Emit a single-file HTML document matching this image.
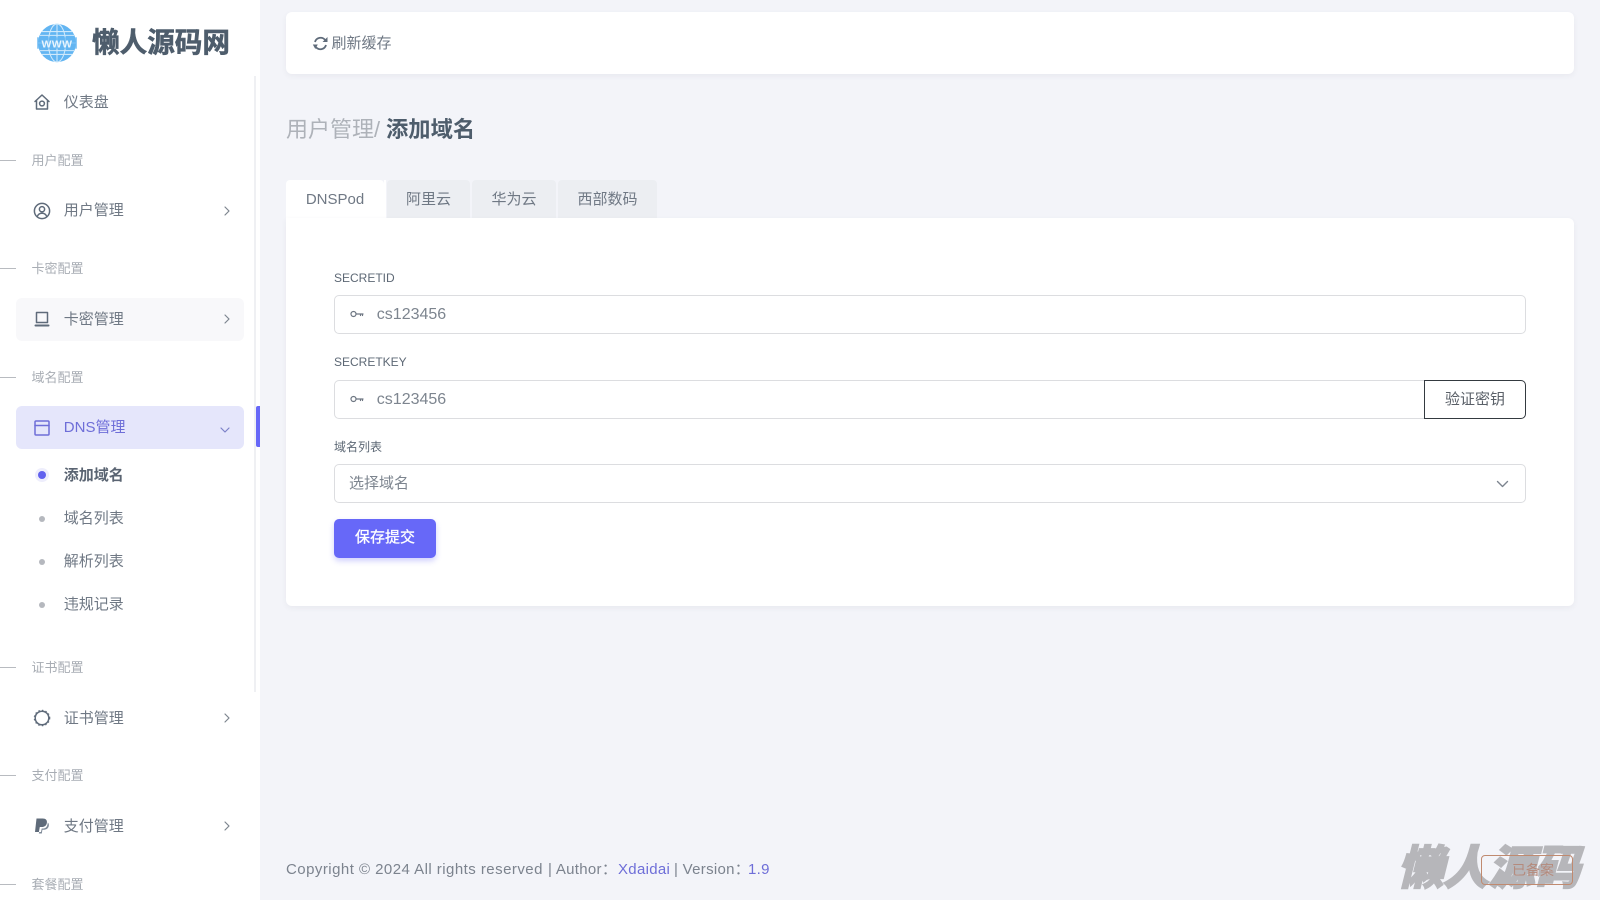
<!DOCTYPE html>
<html lang="zh"><head><meta charset="utf-8"><title>添加域名</title>
<style>
*{box-sizing:border-box}
html,body{margin:0;padding:0;width:1600px;height:900px;overflow:hidden;background:#f3f4f9}
body{font-family:"Liberation Sans","Noto Sans CJK SC",sans-serif;color:#5d6875;position:relative}
.a{position:absolute;white-space:nowrap}
.side{position:absolute;left:0;top:0;width:260px;height:900px;background:#fff}
.item{position:absolute;left:63.8px;font-size:15px;line-height:20px;color:#6f7884}
.lab{position:absolute;left:31.5px;font-size:13px;line-height:18px;color:#a8adb4}
.ln{position:absolute;left:0;width:16px;height:1px;background:#b8bbc0}
.ic{position:absolute;fill:none;stroke:#5f6b7a;stroke-width:1.5;stroke-linecap:round;stroke-linejoin:round}
.card{position:absolute;background:#fff;border-radius:6px;box-shadow:0 2px 6px rgba(60,60,90,.06)}
.tab{position:absolute;top:180px;height:38px;background:#eceef2;text-align:center;line-height:40px;font-size:15px;color:#6f7884;border-radius:4px 4px 0 0}
.f{position:absolute;left:334px;font-size:12px;line-height:16px;color:#5d6875}
.inp{position:absolute;left:334px;width:1192px;height:39px;border:1px solid #dcdde0;border-radius:5px;background:#fff}
.val{position:absolute;left:376.8px;font-size:16px;line-height:20px;color:#7d858f}
.ft{position:absolute;top:860px;font-size:15px;line-height:20px;color:#7c838e;white-space:nowrap}
</style></head><body>

<div class="side">
<svg class="a" style="left:37px;top:23px" width="40" height="40" viewBox="0 0 42 42" fill="none"><circle cx="21" cy="21" r="20" fill="#62b5f2"/><g stroke="#cfe9fb" stroke-width="1.1"><ellipse cx="21" cy="21" rx="9" ry="20"/><path d="M21 1v40M5 9h32M5 33h32M1 21h40M3 13h36M3 29h36"/></g><rect x="0" y="15" width="42" height="12" fill="#62b5f2" opacity=".7"/><text x="21" y="25.5" text-anchor="middle" font-family="Liberation Sans" font-size="11" font-weight="700" fill="#e8f5fe" letter-spacing=".5">WWW</text></svg>
<div class="a" style="left:92px;top:23px;font-size:27.6px;line-height:40px;font-weight:700;color:#4e5d6c;-webkit-text-stroke:.6px #4e5d6c">懒人源码网</div>

<div class="a" style="left:254px;top:76px;width:2px;height:616px;background:#eff0f3"></div>
<div class="a" style="left:256px;top:406px;width:4px;height:41px;background:#6768f8;border-radius:2px 0 0 2px"></div>

<svg class="ic" style="left:33px;top:93px" width="18" height="18" viewBox="0 0 18 18"><path d="M2 8.5 9 2l7 6.5M3.5 7.5V16h11V7.5"/><circle cx="9" cy="10.5" r="2.4"/></svg>
<div class="item" style="top:93px">仪表盘</div>

<div class="ln" style="top:160px"></div><div class="lab" style="top:152px">用户配置</div>
<svg class="ic" style="left:33px;top:202px" width="18" height="18" viewBox="0 0 18 18"><circle cx="9" cy="9" r="7.6"/><circle cx="9" cy="7.2" r="2.6"/><path d="M4.2 14.6c.8-2.4 2.6-3.4 4.8-3.4s4 1 4.8 3.4"/></svg>
<div class="item" style="top:201px">用户管理</div>
<svg class="ic" style="left:222px;top:205px;stroke:#7d858f;stroke-width:1.2" width="10" height="12" viewBox="0 0 10 12"><path d="M3 2l4 4-4 4"/></svg>

<div class="ln" style="top:268px"></div><div class="lab" style="top:260px">卡密配置</div>
<div class="a" style="left:16px;top:298px;width:228px;height:43px;background:#f8f8fa;border-radius:6px"></div>
<svg class="ic" style="left:33px;top:310px" width="18" height="18" viewBox="0 0 18 18"><rect x="3.5" y="2.5" width="11" height="10"/><path d="M2.5 15.5h13" stroke-width="2"/></svg>
<div class="item" style="top:310px">卡密管理</div>
<svg class="ic" style="left:222px;top:313px;stroke:#7d858f;stroke-width:1.2" width="10" height="12" viewBox="0 0 10 12"><path d="M3 2l4 4-4 4"/></svg>

<div class="ln" style="top:377px"></div><div class="lab" style="top:369px">域名配置</div>
<div class="a" style="left:16px;top:406px;width:228px;height:43px;background:#e5e6fb;border-radius:6px"></div>
<svg class="ic" style="left:33px;top:419px;stroke:#6e6ed8" width="18" height="18" viewBox="0 0 18 18"><rect x="2" y="2" width="14" height="14" rx="1"/><path d="M2 6.5h14"/></svg>
<div class="item" style="top:418px;color:#6e6ed8">DNS管理</div>
<svg class="ic" style="left:219px;top:425px;stroke:#7d80c8;stroke-width:1.2" width="12" height="10" viewBox="0 0 12 10"><path d="M2 3l4 4 4-4"/></svg>

<div class="a" style="left:38px;top:471px;width:8px;height:8px;border-radius:50%;background:#6262ee;box-shadow:0 0 0 3px #eeeefc"></div>
<div class="item" style="top:466px;font-weight:700;color:#5a6472">添加域名</div>
<div class="a" style="left:39px;top:516px;width:6px;height:6px;border-radius:50%;background:#b5b8be"></div>
<div class="item" style="top:509px">域名列表</div>
<div class="a" style="left:39px;top:559px;width:6px;height:6px;border-radius:50%;background:#b5b8be"></div>
<div class="item" style="top:552px">解析列表</div>
<div class="a" style="left:39px;top:602px;width:6px;height:6px;border-radius:50%;background:#b5b8be"></div>
<div class="item" style="top:595px">违规记录</div>

<div class="ln" style="top:667px"></div><div class="lab" style="top:659px">证书配置</div>
<svg class="ic" style="left:33px;top:709px;stroke-width:1.5" width="18" height="18" viewBox="0 0 18 18"><circle cx="9" cy="9" r="6.8"/><circle cx="9" cy="9" r="7.7" stroke-width="1.2" stroke-dasharray="1.4 2.2" stroke-linecap="butt"/></svg>
<div class="item" style="top:709px">证书管理</div>
<svg class="ic" style="left:222px;top:712px;stroke:#7d858f;stroke-width:1.2" width="10" height="12" viewBox="0 0 10 12"><path d="M3 2l4 4-4 4"/></svg>

<div class="ln" style="top:775px"></div><div class="lab" style="top:767px">支付配置</div>
<svg class="a" style="left:33px;top:817px" width="18" height="18" viewBox="0 0 18 18"><path d="M3.5 1.5h6.2c3 0 4.6 1.6 4.2 4.2-.4 2.8-2.4 4.3-5.2 4.3H6.8L5.9 15H2z" fill="#5f6b7a"/><path d="M14.8 5.5c.9.8 1.3 2 1 3.4-.5 2.5-2.3 3.8-4.8 3.8H9.4L8.8 16.5H5.8l.4-1.5H8l.7-3.5h1.5c2.5 0 4.2-1.6 4.6-6z" fill="#7f8a98"/></svg>
<div class="item" style="top:817px">支付管理</div>
<svg class="ic" style="left:222px;top:820px;stroke:#7d858f;stroke-width:1.2" width="10" height="12" viewBox="0 0 10 12"><path d="M3 2l4 4-4 4"/></svg>

<div class="ln" style="top:884px"></div><div class="lab" style="top:876px">套餐配置</div>
</div>

<div class="card" style="left:286px;top:12px;width:1288px;height:62px"></div>
<svg class="a" style="left:312px;top:35px" width="17" height="17" viewBox="0 0 17 17" fill="none"><path d="M3 7a5.8 5.8 0 0 1 10-2.2M14 10a5.8 5.8 0 0 1-10 2.2" stroke="#5f6b7a" stroke-width="1.8"/><path d="M15.5 2v5h-5zM.8 9.5h5l-2.5 4.5z" fill="#5f6b7a"/></svg>
<div class="a" style="left:331.5px;top:34px;font-size:15px;line-height:20px;color:#6f7884">刷新缓存</div>

<div class="a" style="left:286px;top:114px;font-size:22px;line-height:32px;color:#aeb2b9">用户管理/</div>
<div class="a" style="left:386px;top:114px;font-size:22.3px;line-height:32px;font-weight:700;color:#4e5d6c">添加域名</div>

<div class="tab" style="left:286px;width:98px;background:#fff;padding-right:0">DNSPod</div>
<div class="a" style="left:384px;top:180px;width:2px;height:38px;background:#fff"></div>
<div class="tab" style="left:387px;width:83px">阿里云</div>
<div class="tab" style="left:472px;width:84px">华为云</div>
<div class="tab" style="left:558px;width:99px">西部数码</div>

<div class="card" style="left:286px;top:218px;width:1288px;height:388px;border-radius:0 6px 6px 6px"></div>

<div class="f" style="top:270px">SECRETID</div>
<div class="inp" style="top:295px"></div>
<svg class="ic" style="left:350px;top:309px;stroke:#6d7682;stroke-width:1.2" width="14" height="10" viewBox="0 0 14 10"><circle cx="3.5" cy="5" r="2.5"/><path d="M6 5h7M10.5 5v1.5M12.5 5v1.5"/></svg>
<div class="val" style="top:305px">cs123456</div>

<div class="f" style="top:354px">SECRETKEY</div>
<div class="inp" style="top:380px;width:1100px;border-radius:5px 0 0 5px"></div>
<svg class="ic" style="left:350px;top:394px;stroke:#6d7682;stroke-width:1.2" width="14" height="10" viewBox="0 0 14 10"><circle cx="3.5" cy="5" r="2.5"/><path d="M6 5h7M10.5 5v1.5M12.5 5v1.5"/></svg>
<div class="val" style="top:390px">cs123456</div>
<div class="a" style="left:1424px;top:380px;width:102px;height:39px;border:1px solid #343a40;border-radius:0 5px 5px 0;background:#fff;text-align:center;line-height:37px;font-size:15px;color:#5a6068">验证密钥</div>

<div class="f" style="top:439px">域名列表</div>
<div class="inp" style="top:464px"></div>
<div class="a" style="left:349px;top:474px;font-size:15px;line-height:20px;color:#7d858f">选择域名</div>
<svg class="ic" style="left:1496px;top:479px;stroke:#7d858f;stroke-width:1.4" width="13" height="10" viewBox="0 0 13 10"><path d="M1.5 2.5l5 5 5-5"/></svg>

<div class="a" style="left:334px;top:519px;width:102px;height:39px;background:#6768f8;border-radius:5px;text-align:center;line-height:38px;font-size:15px;color:#fff;box-shadow:0 3px 6px rgba(103,104,248,.3);-webkit-text-stroke:.3px #fff">保存提交</div>

<div class="ft" style="left:286px;letter-spacing:.46px">Copyright © 2024 All rights reserved</div>
<div class="ft" style="left:548px;letter-spacing:.3px">| Author：</div>
<div class="ft" style="left:618px;letter-spacing:.3px;color:#6e6ed8">Xdaidai</div>
<div class="ft" style="left:674px;letter-spacing:.3px">| Version：</div>
<div class="ft" style="left:748px;letter-spacing:.3px;color:#6e6ed8">1.9</div>

<div class="a" style="left:1394px;top:838px;font-size:46px;line-height:60px;font-weight:900;color:#b6b6ba;-webkit-text-stroke:1.8px #b6b6ba;transform:skewX(-14deg);transform-origin:left bottom;letter-spacing:-.5px">懒人源码</div>
<div class="a" style="left:1481px;top:855px;width:92px;height:30px;border:1px solid #c08a70;border-radius:4px"></div>
<div class="a" style="left:1512px;top:860px;font-size:14px;line-height:20px;color:#b58a7c">已备案</div>
</body></html>
